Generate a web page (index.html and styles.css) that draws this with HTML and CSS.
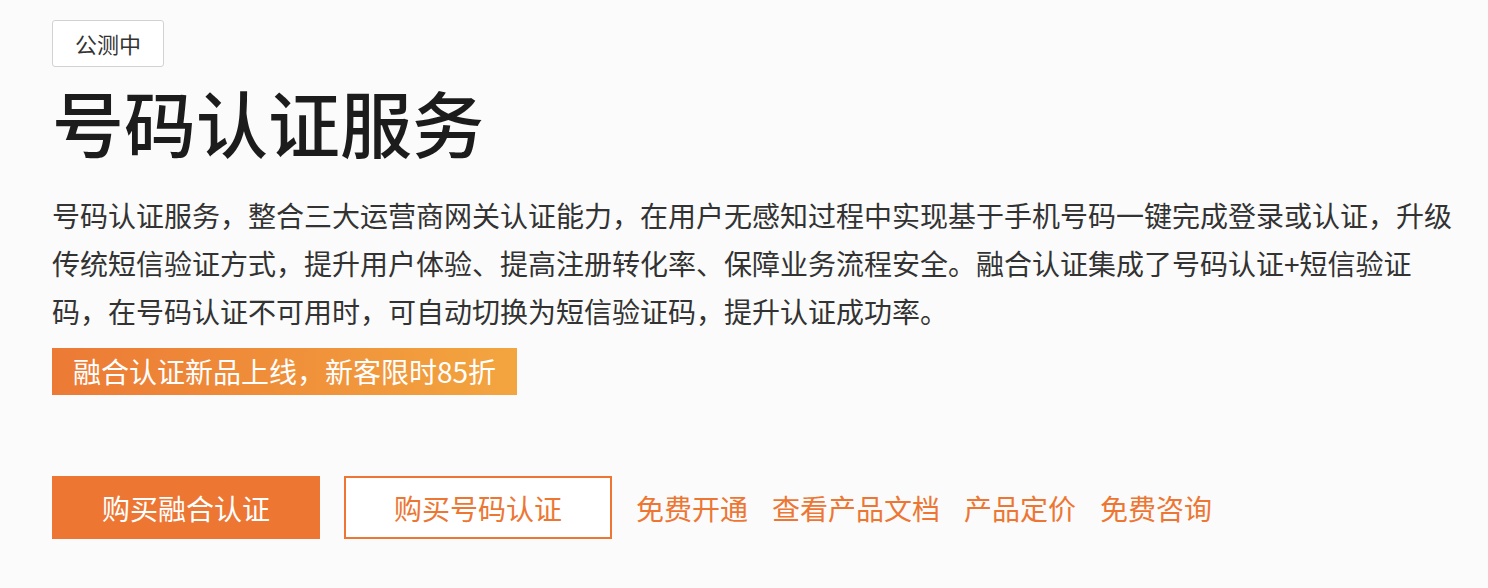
FILE: index.html
```html
<!DOCTYPE html>
<html lang="zh-CN">
<head>
<meta charset="utf-8">
<title>号码认证服务</title>
<link rel="stylesheet" href="styles.css">
</head>
<body>
<main class="hero">
  <div class="badge">公测中</div>
  <h1 class="title">号码认证服务</h1>
  <p class="desc">号码认证服务，整合三大运营商网关认证能力，在用户无感知过程中实现基于手机号码一键完成登录或认证，升级传统短信验证方式，提升用户体验、提高注册转化率、保障业务流程安全。融合认证集成了号码认证+短信验证码，在号码认证不可用时，可自动切换为短信验证码，提升认证成功率。</p>
  <div class="promo">融合认证新品上线，新客限时85折</div>
  <div class="actions">
    <a class="btn btn-primary" href="#">购买融合认证</a>
    <a class="btn btn-outline" href="#">购买号码认证</a>
    <nav class="links">
      <a href="#">免费开通</a>
      <a href="#">查看产品文档</a>
      <a href="#">产品定价</a>
      <a href="#">免费咨询</a>
    </nav>
  </div>
</main>
</body>
</html>
```
FILE: styles.css
```css
* { box-sizing: border-box; }
html, body {
  margin: 0;
  padding: 0;
  background: #fbfbfb;
}
body {
  font-family: "Noto Sans CJK SC", "Noto Sans", sans-serif;
  color: #333;
}
.hero {
  padding: 20px 0 0 52px;
  display: flex;
  flex-direction: column;
  align-items: flex-start;
}
.badge {
  height: 47px;
  padding: 0 22px;
  border: 1px solid #d2d2d2;
  border-radius: 3px;
  font-size: 22px;
  line-height: 45px;
  color: #333;
  background: #fff;
}
.title {
  margin: 14px 0 0;
  font-size: 72px;
  line-height: 80px;
  font-weight: 500;
  color: #1c1c1c;
}
.desc {
  margin: 30px 0 0;
  width: 1410px;
  font-size: 28px;
  line-height: 48px;
  color: #333;
}
.promo {
  margin-top: 13px;
  height: 47px;
  padding: 0 21px;
  font-size: 28px;
  line-height: 47px;
  color: #fff;
  background: linear-gradient(90deg, #ec7a35 0%, #f3a53f 100%);
}
.actions {
  margin-top: 81px;
  display: flex;
  align-items: center;
}
.btn {
  display: flex;
  align-items: center;
  justify-content: center;
  width: 268px;
  height: 63px;
  font-size: 28px;
  text-decoration: none;
}
.btn-primary {
  background: #ed7633;
  color: #fff;
}
.btn-outline {
  margin-left: 24px;
  border: 2px solid #ed7633;
  color: #ed7633;
  background: #fff;
}
.links {
  margin-left: 24px;
  display: flex;
  gap: 24px;
}
.links a {
  font-size: 28px;
  color: #ed7633;
  text-decoration: none;
}
```
